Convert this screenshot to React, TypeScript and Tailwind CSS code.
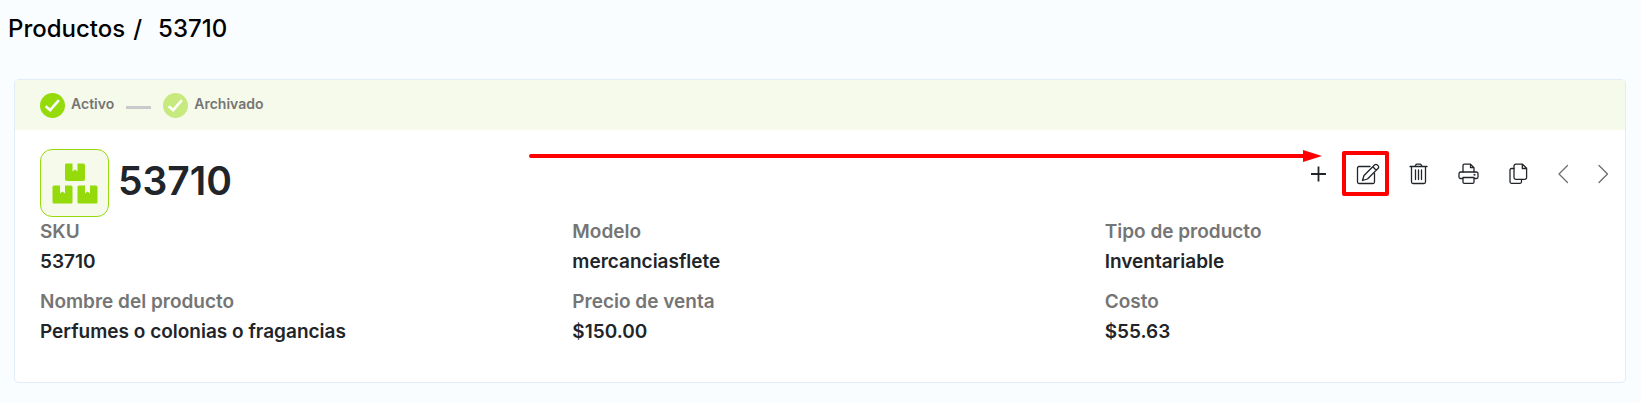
import type { ReactNode } from "react";

type Field = { label: string; value: string };

const FIELDS: Field[] = [
  { label: "SKU", value: "53710" },
  { label: "Modelo", value: "mercanciasflete" },
  { label: "Tipo de producto", value: "Inventariable" },
  { label: "Nombre del producto", value: "Perfumes o colonias o fragancias" },
  { label: "Precio de venta", value: "$150.00" },
  { label: "Costo", value: "$55.63" },
];

function StatusStep({ label, active }: { label: string; active: boolean }) {
  return (
    <li className="flex items-center gap-[6px]">
      <svg
        viewBox="0 0 25 25"
        className={`size-[25px] ${active ? "text-[#95da0a]" : "text-[#c7ea7e]"}`}
        aria-hidden="true"
      >
        <circle cx="12.5" cy="12.5" r="12.5" fill="currentColor" />
        <path d="M5.7 13.2 10.2 17.2 18.9 7.2" fill="none" stroke="#fff" strokeWidth="2.6" />
      </svg>
      <span className="pb-0.5 text-sm font-semibold text-[#757575]">{label}</span>
    </li>
  );
}

function BoxesIcon() {
  return (
    <svg viewBox="0 0 46 41" className="h-[41px] w-[46px] text-[#95da0a]" fill="currentColor" aria-hidden="true">
      <path d="M14 0.5h6.5v8l2.5-2 2.5 2v-8H31a2 2 0 0 1 2 2V16a2 2 0 0 1-2 2H15a2 2 0 0 1-2-2V2.5a2 2 0 0 1 1-2z" />
      <path d="M2 22.5h6v8l2.5-2 2.5 2v-8h6a1.5 1.5 0 0 1 1.5 1.5v15a1.5 1.5 0 0 1-1.5 1.5H2A1.5 1.5 0 0 1 .5 39V24A1.5 1.5 0 0 1 2 22.5z" />
      <path d="M27 22.5h6v8l2.5-2 2.5 2v-8h6a1.5 1.5 0 0 1 1.5 1.5v15a1.5 1.5 0 0 1-1.5 1.5H27a1.5 1.5 0 0 1-1.5-1.5V24a1.5 1.5 0 0 1 1.5-1.5z" />
    </svg>
  );
}

function Icon({ children }: { children: ReactNode }) {
  return (
    <svg
      viewBox="0 0 24 24"
      className="size-6"
      fill="none"
      stroke="currentColor"
      strokeWidth="1.3"
      strokeLinejoin="round"
      strokeLinecap="round"
      aria-hidden="true"
    >
      {children}
    </svg>
  );
}

function ToolButton({ label, narrow, marked, children }: {
  label: string;
  narrow?: boolean;
  marked?: boolean;
  children: ReactNode;
}) {
  return (
    <button
      type="button"
      aria-label={label}
      className={`relative flex h-11 items-center justify-center ${narrow ? "w-10 text-[#6b6e72]" : "w-[50px] text-[#212529]"}`}
    >
      {children}
      {marked && <span className="absolute -top-px -left-px h-[45px] w-[47px] rounded-[2px] border-4 border-[#ff0000]" />}
    </button>
  );
}

function Toolbar() {
  return (
    <div className="flex">
      <ToolButton label="Nuevo">
        <Icon>
          <path d="M12.5 4.5v15M5 12h15" strokeWidth="1.8" strokeLinecap="butt" />
        </Icon>
      </ToolButton>
      <ToolButton label="Editar" marked>
        <Icon>
          <path d="M14 4.5H3A1.5 1.5 0 0 0 1.5 6v14A1.5 1.5 0 0 0 3 21.5h14a1.5 1.5 0 0 0 1.5-1.5v-8.5" />
          <path d="M6.5 18.5l1.5-5L18.8 2.8a1.6 1.6 0 0 1 2.3 0l1.1 1.1a1.6 1.6 0 0 1 0 2.3L11.5 17l-5 1.5zM16.8 4.8l3.4 3.4" />
        </Icon>
      </ToolButton>
      <ToolButton label="Eliminar">
        <Icon>
          <path d="M4 4.5h17M5.5 4.5V20A1.5 1.5 0 0 0 7 21.5h11a1.5 1.5 0 0 0 1.5-1.5V4.5M9 4.5l.7-1.5a1.5 1.5 0 0 1 1.3-.8h3a1.5 1.5 0 0 1 1.3.8l.7 1.5" />
          <path d="M9.5 8v9.5M12.5 8v9.5M15.5 8v9.5" />
        </Icon>
      </ToolButton>
      <ToolButton label="Imprimir">
        <Icon>
          <path d="M7 10V3.5A1.3 1.3 0 0 1 8.3 2.2h6.2L18 5.7V10M14.5 2.2v3.5H18" />
          <path d="M7 16.5H4.5A1.5 1.5 0 0 1 3 15v-3.2A1.8 1.8 0 0 1 4.8 10h15.4a1.8 1.8 0 0 1 1.8 1.8V15a1.5 1.5 0 0 1-1.5 1.5H18M7 15.5h11V20a1.3 1.3 0 0 1-1.3 1.3H8.3A1.3 1.3 0 0 1 7 20z" />
          <circle cx="18.5" cy="12.8" r=".4" />
        </Icon>
      </ToolButton>
      <ToolButton label="Duplicar">
        <Icon>
          <path d="M16.5 2.2H9.8A1.8 1.8 0 0 0 8 4v11.5a1.8 1.8 0 0 0 1.8 1.8h9a1.8 1.8 0 0 0 1.8-1.8V6.3zM16.3 2.4v4.1h4.1" />
          <path d="M8 6.5H5.5A1.5 1.5 0 0 0 4 8v11.8a1.5 1.5 0 0 0 1.5 1.5H14a1.5 1.5 0 0 0 1.5-1.5v-2.3" />
        </Icon>
      </ToolButton>
      <ToolButton label="Anterior" narrow>
        <Icon>
          <path d="M16.5 3.5 8 12l8.5 8.5" />
        </Icon>
      </ToolButton>
      <ToolButton label="Siguiente" narrow>
        <Icon>
          <path d="M8 3.5 16.5 12 8 20.5" />
        </Icon>
      </ToolButton>
    </div>
  );
}

export default function App() {
  return (
    <main className="min-h-screen bg-[#f9fdff] pr-[15px] pb-5 pl-[14px] font-[Inter,sans-serif]">
      <nav className="-ml-[6px] flex h-[79px] items-start gap-2 pt-[11px] text-2xl leading-9 font-medium text-black">
        <a href="#productos">Productos</a>
        <span>/</span>
        <span className="pl-2">53710</span>
      </nav>

      <section className="overflow-hidden rounded-[5px] border border-[#e2edf9] bg-white">
        <ol className="flex h-[50px] items-center bg-[#f6faea] pl-[25px]">
          <StatusStep label="Activo" active />
          <li aria-hidden="true" className="mx-3 mt-1 h-[3px] w-[25px] bg-[#c8cacb]" />
          <StatusStep label="Archivado" active={false} />
        </ol>

        <header className="relative flex items-start justify-between pt-[19px] pl-[25px]">
          <div className="flex items-center gap-[9px]">
            <div className="flex h-[68px] w-[69px] items-center justify-center rounded-xl border border-[#95da0a] bg-[#f6faea]">
              <BoxesIcon />
            </div>
            <h1 className="pb-1 text-[39px] leading-[48px] font-semibold text-[#212529]">53710</h1>
          </div>
          <div className="flex pt-[3px] pr-0.5">
            <Toolbar />
          </div>
          <div aria-hidden="true" className="absolute top-5 right-[303px] left-[514px] flex h-3 items-center">
            <span className="h-1 flex-1 rounded-l-full bg-[#ff0000]" />
            <svg viewBox="0 0 19 12" className="h-3 w-[19px]" fill="#ff0000">
              <path d="M0 0 19 6 0 12z" />
            </svg>
          </div>
        </header>

        <dl className="grid grid-cols-3 gap-x-6 gap-y-[10px] pr-3 pb-[35px] pl-[25px] text-[19px] leading-[30px] font-semibold">
          {FIELDS.map((field) => (
            <div key={field.label}>
              <dt className="text-[#757575]">{field.label}</dt>
              <dd className="text-[#212529]">{field.value}</dd>
            </div>
          ))}
        </dl>
      </section>
    </main>
  );
}
